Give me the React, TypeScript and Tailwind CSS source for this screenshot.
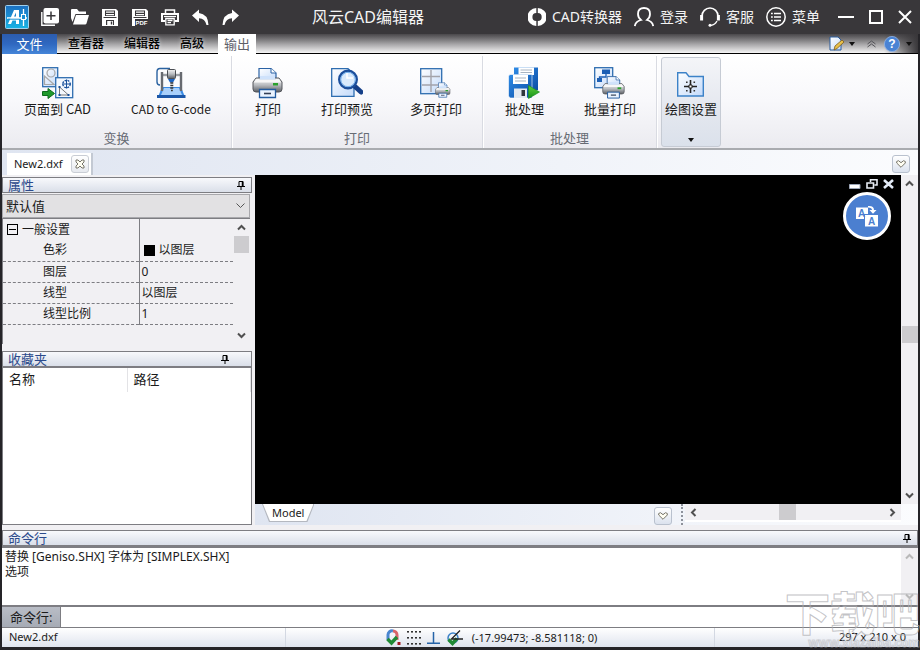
import type { ReactNode } from "react";

interface PropertyRow {
  name: string;
  value: string;
  swatch?: boolean;
}

const PROPERTIES: PropertyRow[] = [
  { name: "色彩", value: "以图层", swatch: true },
  { name: "图层", value: "0" },
  { name: "线型", value: "以图层" },
  { name: "线型比例", value: "1" },
];

const RIBBON_TABS = ["查看器", "编辑器", "高级"];

/* ── Title bar icons ── */

function LogoIcon() {
  return (
    <svg width="24" height="24" viewBox="0 0 24 24" fill="none">
      <defs>
        <linearGradient id="logo" x1="0" y1="0" x2="0" y2="1">
          <stop offset="0" stopColor="#1c6fc0" />
          <stop offset="1" stopColor="#18b4e6" />
        </linearGradient>
      </defs>
      <rect x="0.5" y="0.5" width="23" height="23" rx="1" fill="url(#logo)" stroke="#9fd0ee" />
      <path d="M3 19 L9 5 H14 V19 H11 V15.500 H7.500 L6 19 Z" fill="#fff" />
      <path d="M9 11.500 L11 7.500 V11.500 Z" fill="#1c83cc" />
      <path d="M2 13 H22 M18.500 4 V21" stroke="#fff" strokeWidth="1.300" />
      <path d="M3 14.200 H14" stroke="#1a93d4" strokeWidth="1" />
      <rect x="16.500" y="9.500" width="4" height="5" fill="#1a8fd2" stroke="#fff" />
    </svg>
  );
}

function NewIcon() {
  return (
    <svg width="18" height="18" viewBox="0 0 18 18" fill="none">
      <path d="M0.800 4 V17.200 H14" stroke="#fff" strokeWidth="1.400" />
      <rect x="2.500" y="0" width="15.500" height="15.500" rx="2" fill="#fff" />
      <path d="M10 3.500 V12 M5.500 7.750 H14.500" stroke="#39373a" strokeWidth="1.500" />
    </svg>
  );
}

function OpenIcon() {
  return (
    <svg width="18" height="18" viewBox="0 0 18 18" fill="#fff">
      <path d="M0 2 Q0 1 1 1 H6 L8 3.500 H15 V6 H4.500 L1.500 14 L0 10 Z" />
      <path d="M5 7 H18 L15.500 15.500 Q15.200 16.500 14 16.500 H2 Z" />
    </svg>
  );
}

function SaveIcon() {
  return (
    <svg width="16" height="17" viewBox="0 0 16 17">
      <path d="M0 0 H14 L16 2 V17 H0 Z" fill="#fff" />
      <path d="M3 1.500 H13 V7 H3 Z" fill="#39373a" />
      <path d="M4 2.500 H12 V3.700 H4 Z M4 5 H12 V6.200 H4 Z" fill="#fff" />
      <path d="M1.500 8 H14.500 V9 H1.500 Z M4 11 H12 V16 H4 Z" fill="#39373a" />
      <path d="M5.200 12 H11 V16 H5.200 Z" fill="#fff" />
      <path d="M8.800 12.500 H10.200 V15.500 H8.800 Z" fill="#39373a" />
    </svg>
  );
}

function SavePdfIcon() {
  return (
    <svg width="16" height="17" viewBox="0 0 16 17">
      <path d="M0 0 H14 L16 2 V17 H0 Z" fill="#fff" />
      <path d="M3 1.500 H13 V7 H3 Z" fill="#39373a" />
      <path d="M4 2.500 H12 V3.700 H4 Z M4 5 H12 V6.200 H4 Z" fill="#fff" />
      <path d="M1.500 8 H14.500 V9 H1.500 Z M3 10 H16 V17 H3 Z" fill="#39373a" />
      <text x="3.500" y="16" fontSize="6" fontWeight="700" fontFamily="Liberation Sans" fill="#fff">
        PDF
      </text>
    </svg>
  );
}

function PrintIcon() {
  return (
    <svg width="18" height="17" viewBox="0 0 18 17" fill="none" stroke="#fff">
      <path d="M4.500 5 V1 H13.500 V5" strokeWidth="1.500" />
      <path d="M4 12 H1 V5 H17 V12 H14" strokeWidth="2" />
      <path d="M3 7.500 H15" strokeWidth="1.200" />
      <path d="M4.800 9.500 H13.200 V15.800 H4.800 Z M6.500 11.500 H11.500 M6.500 13.700 H10" strokeWidth="1.300" />
    </svg>
  );
}

function UndoIcon({ flip }: { flip?: boolean }) {
  return (
    <svg
      width="17"
      height="17"
      viewBox="0 0 17 17"
      fill="#fff"
      className={flip ? "-scale-x-100" : undefined}
    >
      <path d="M0 6.500 L7 0.500 V4 Q16 5 16.500 16 L14.500 16 Q13 9.500 7 9.300 V13 Z" />
    </svg>
  );
}

function ConvertIcon() {
  return (
    <svg width="18" height="18" viewBox="0 0 18 18" fill="none" stroke="#fff" strokeWidth="5">
      <path d="M8.300 2.600 A6.400 6.400 0 0 0 8.300 15.400" />
      <path d="M9.800 2.600 A6.400 6.400 0 0 1 9.800 15.400" />
    </svg>
  );
}

function UserIcon() {
  return (
    <svg width="20" height="20" viewBox="0 0 20 20" fill="none" stroke="#fff" strokeWidth="1.800">
      <path d="M0.800 19 Q1.500 14.500 7 13 Q4 10.500 4 7 Q4 1 10 1 Q16 1 16 7 Q16 10.500 13 13 Q18.500 14.500 19.200 19" />
    </svg>
  );
}

function HeadsetIcon() {
  return (
    <svg width="20" height="20" viewBox="0 0 20 20" fill="none" stroke="#fff">
      <path d="M2 9 A8 8 0 0 1 18 9" strokeWidth="1.600" />
      <path d="M1.600 8 V13.500 M18.400 8 V13.500" strokeWidth="3" />
      <path d="M17 14 Q15 18 11 18.300" strokeWidth="1.300" />
      <circle cx="10" cy="18.300" r="1.500" fill="#fff" stroke="none" />
    </svg>
  );
}

function MenuIcon() {
  return (
    <svg width="20" height="20" viewBox="0 0 20 20" fill="none" stroke="#fff">
      <circle cx="10" cy="10" r="9.200" strokeWidth="1.500" />
      <path d="M8 6.500 H15 M8 10 H15 M8 13.500 H15" strokeWidth="1.600" />
      <path d="M5 6.500 H6.800 M5 10 H6.800 M5 13.500 H6.800" strokeWidth="1.600" />
    </svg>
  );
}

/* ── Ribbon icons ── */

function SvgDefs() {
  return (
    <svg width="0" height="0" className="absolute" aria-hidden="true">
      <defs>
        <linearGradient id="paper" x1="0" y1="0" x2="1" y2="1">
          <stop offset="0" stopColor="#ffffff" />
          <stop offset="1" stopColor="#c3dafa" />
        </linearGradient>
        <linearGradient id="metal" x1="0" y1="0" x2="0" y2="1">
          <stop offset="0" stopColor="#f4f4f4" />
          <stop offset="0.500" stopColor="#b9bcc0" />
          <stop offset="1" stopColor="#5b5e64" />
        </linearGradient>
        <linearGradient id="floppy" x1="0" y1="0" x2="1" y2="1">
          <stop offset="0" stopColor="#2f8be6" />
          <stop offset="1" stopColor="#0b4ea6" />
        </linearGradient>
        <linearGradient id="leaf" x1="0" y1="0" x2="0" y2="1">
          <stop offset="0" stopColor="#5fd03c" />
          <stop offset="1" stopColor="#149018" />
        </linearGradient>
      </defs>
    </svg>
  );
}

function PageToCadIcon() {
  return (
    <svg width="32" height="32" viewBox="0 0 32 32" fill="none">
      <rect x="0.700" y="0.700" width="15" height="19" fill="url(#paper)" stroke="#2e6db0" strokeWidth="1.300" />
      <circle cx="9" cy="6" r="4" stroke="#a7a7a7" strokeWidth="1.200" />
      <path d="M2.500 9 V17.500 H12 Z" stroke="#a7a7a7" strokeWidth="1.200" />
      <rect x="13.700" y="10.700" width="17" height="20" fill="#f3f8ff" stroke="#2e6db0" strokeWidth="1.300" />
      <circle cx="24.500" cy="17" r="3.700" stroke="#174f9a" strokeWidth="1.300" strokeDasharray="2 1" />
      <path d="M20 17 H29 M24.500 12.500 V21.500" stroke="#174f9a" strokeWidth="1" />
      <path d="M17.500 20 V28 H26.500 Z" stroke="#777" strokeWidth="1" />
      <path d="M16.500 19 h2 v2 h-2 Z M16.500 27 h2 v2 h-2 Z M25.500 27 h2 v2 h-2 Z" fill="#174f9a" />
      <path d="M0.500 24.500 H6 V21.500 L12.500 26.500 L6 31.500 V28.500 H0.500 Z" fill="#1f9a2c" stroke="#0d6a1c" />
    </svg>
  );
}

function GcodeIcon() {
  return (
    <svg width="30" height="32" viewBox="0 0 30 32" fill="none">
      <path d="M14 1.500 H4 Q1 1.500 1 5 V15 Q1 18 4 18" stroke="#2a62a0" strokeWidth="1.400" />
      <path d="M6 20 L2 30 H29 L25 20 Z" fill="#3b8be4" />
      <path d="M8 21 L5 28 H26 L23 21 Z" fill="#a9d0fb" />
      <path d="M1 28 H29.500 V31 H1 Z" fill="#1c57a8" />
      <path d="M5 8 H26" stroke="#9b9ea3" strokeWidth="2.400" />
      <path d="M6 5 V24 M25 5 V24" stroke="#676a70" strokeWidth="2.400" />
      <rect x="11.500" y="2.500" width="8" height="9" rx="1" fill="url(#metal)" stroke="#4b4e54" />
      <path d="M12 12 H19 L17 15.500 H14 Z" fill="#1c63c0" />
      <path d="M14.300 16 h3 M14.300 18.500 h3 M14.300 21 h3 M15 23.500 h1.800" stroke="#333" strokeWidth="1.500" />
    </svg>
  );
}

function PrinterShape() {
  return (
    <>
      <path d="M7 13 V1.500 H19 L24 6 V13 Z" fill="url(#paper)" stroke="#2b62a4" strokeWidth="1.200" />
      <path d="M19 1.500 V6 H24" fill="#fff" stroke="#2b62a4" />
      <path d="M4 11 H27 L30 15 V22 Q30 25 27 25 H4 Q1 25 1 22 V15 Z" fill="url(#metal)" stroke="#54575c" />
      <path d="M4 12 H7 V13 H24 V12 H27 L29 15.500 H2 Z" fill="#f7f7f7" />
      <path d="M8 9 H23 V12.500 H8 Z" fill="#cfe2fb" />
      <path d="M21 16 H26 V18.500 H21 Z" fill="#2aa12c" />
      <path d="M7.500 22.500 H23.500 V30.500 H7.500 Z" fill="#eaf3ff" stroke="#235b9f" strokeWidth="1.300" />
      <path d="M12 26.500 H19" stroke="#333f55" strokeWidth="1.600" />
    </>
  );
}

function BigPrinterIcon() {
  return (
    <svg width="32" height="32" viewBox="0 0 32 32">
      <PrinterShape />
    </svg>
  );
}

function PreviewIcon() {
  return (
    <svg width="32" height="32" viewBox="0 0 32 32" fill="none">
      <path d="M0.700 1.700 H17 L23 7 V29.300 H0.700 Z" fill="url(#paper)" stroke="#2e6db0" strokeWidth="1.300" />
      <path d="M24 19.500 L30 25" stroke="#153f88" strokeWidth="5" strokeLinecap="round" />
      <circle cx="17" cy="12.500" r="8.800" fill="#d9eafc" stroke="#1c4f9c" strokeWidth="2.400" />
      <circle cx="17" cy="12.500" r="7.200" stroke="#74b1ee" strokeWidth="1" />
      <path d="M16 6 V11 H22" stroke="#fff" strokeWidth="1.500" />
    </svg>
  );
}

function MultiPageIcon() {
  return (
    <svg width="32" height="32" viewBox="0 0 32 32" fill="none">
      <rect x="0.700" y="1.700" width="21" height="25" fill="url(#paper)" stroke="#2e6db0" strokeWidth="1.300" />
      <path d="M11 3 V25 M2 9.500 H20 M2 18 H20" stroke="#a3a3aa" strokeWidth="1.400" />
      <g transform="translate(15 15) scale(0.500)">
        <PrinterShape />
      </g>
    </svg>
  );
}

function BatchIcon() {
  return (
    <svg width="32" height="32" viewBox="0 0 32 32" fill="none">
      <path d="M6 0.500 H30 V23 H6 Z" fill="url(#floppy)" />
      <path d="M10.500 0.500 H26 V8 H10.500 Z" fill="#fff" />
      <path d="M12.500 3 H24 M12.500 5.500 H24" stroke="#a8b4c2" strokeWidth="1" />
      <path d="M2 7.500 H24 V31 H2 L0.500 29 V9 Z" fill="url(#floppy)" stroke="#fff" strokeWidth="0.600" />
      <path d="M5 8 H20 V17 H5 Z" fill="#fff" />
      <path d="M7 11 H18 M7 14 H18" stroke="#a8b4c2" strokeWidth="1.200" />
      <path d="M6 21.500 H19 V31 H6 Z" fill="#e3e9f1" />
      <path d="M13.500 23 H17 V29 H13.500 Z" fill="#30353c" />
      <path d="M20.500 18.500 L31.500 25 L20.500 31.500 Z" fill="url(#leaf)" stroke="#1d8f22" strokeWidth="0.700" />
    </svg>
  );
}

function BatchPrintIcon() {
  return (
    <svg width="32" height="32" viewBox="0 0 32 32" fill="none">
      <rect x="0.700" y="0.700" width="18" height="20" fill="url(#paper)" stroke="#2e6db0" strokeWidth="1.300" />
      <path d="M8 2.500 H16 V7 H8 Z M3 11 H8 V15 H3 Z" fill="#1d5fb4" />
      <path d="M12 7 V10 H5.500 V12" stroke="#1d5fb4" strokeWidth="1.300" />
      <g transform="translate(8 8.500) scale(0.740)">
        <PrinterShape />
      </g>
    </svg>
  );
}

function DrawingSettingsIcon() {
  return (
    <svg width="27" height="26" viewBox="0 0 27 26" fill="none">
      <path d="M0.700 25 V1.700 H9 L12 5.500 H26.300 V25 Z" fill="url(#paper)" stroke="#3c82c8" strokeWidth="1.400" />
      <path d="M13.500 9 V14 M13.500 17 V22 M7 15.500 H12 M15 15.500 H20" stroke="#222" strokeWidth="1.600" />
      <path
        d="M9 10.500 h1.600 v1.600 h-1.600 Z M16.500 10.500 h1.600 v1.600 h-1.600 Z M9 19 h1.600 v1.600 h-1.600 Z M16.500 19 h1.600 v1.600 h-1.600 Z"
        fill="#333"
      />
      <path d="M12 14 h3 v3 h-3 Z" fill="#fff" stroke="#222" />
    </svg>
  );
}

/* ── Small glyphs ── */

function Triangle() {
  return (
    <svg width="6" height="4" viewBox="0 0 6 4" fill="#111">
      <path d="M0 0 H6 L3 4 Z" />
    </svg>
  );
}

function PinIcon() {
  return (
    <svg width="8" height="9" viewBox="0 0 8 9" fill="none" stroke="#000">
      <path d="M2 5 V0.500 H6 V5 M0 5.500 H8 M4 6 V9" />
      <path d="M5.500 0.500 V5" strokeWidth="1.500" />
    </svg>
  );
}

function HeartIcon() {
  return (
    <svg width="10" height="8" viewBox="0 0 10 8" fill="#fffef2" stroke="#77756a">
      <path d="M5 7.300 L0.700 3 L0.700 1.500 L2.500 0.700 L5 2.700 L7.500 0.700 L9.300 1.500 L9.300 3 Z" />
    </svg>
  );
}

type Direction = "up" | "down" | "left" | "right";

const ARROW_PATHS: Record<Direction, string> = {
  up: "M1 6.500 L4.500 3 L8 6.500",
  down: "M1 2.500 L4.500 6 L8 2.500",
  left: "M6.500 1 L3 4.500 L6.500 8",
  right: "M2.500 1 L6 4.500 L2.500 8",
};

function ScrollButton({ direction, label, muted }: { direction: Direction; label: string; muted?: boolean }) {
  return (
    <button type="button" aria-label={label} className="flex size-[17px] shrink-0 items-center justify-center">
      <svg width="9" height="9" viewBox="0 0 9 9" fill="none" stroke={muted ? "#b9b9b9" : "#505050"} strokeWidth="2">
        <path d={ARROW_PATHS[direction]} />
      </svg>
    </button>
  );
}

function DropButton({ label }: { label: string }) {
  return (
    <button
      type="button"
      aria-label={label}
      className="flex size-[18px] items-center justify-center rounded-[3px] border border-[#b9c1ce] bg-gradient-to-b from-white to-[#dbe2ee]"
    >
      <HeartIcon />
    </button>
  );
}

function PanelHeader({ title, pinClass }: { title: string; pinClass: string }) {
  return (
    <div
      className={`flex h-4 shrink-0 items-center justify-between border border-[#7d7d82] bg-gradient-to-b from-[#f8f9fc] to-[#dadfe9] pl-[5px] ${pinClass}`}
    >
      <h2 className="text-[13px] leading-4 text-[#2b4a8b]">{title}</h2>
      <button type="button" aria-label={`固定${title}`}>
        <PinIcon />
      </button>
    </div>
  );
}

function RibbonButton({ icon, label, small }: { icon: ReactNode; label: string; small?: boolean }) {
  return (
    <button type="button" className="flex flex-col items-center">
      <span className="flex h-8 items-center">{icon}</span>
      <span
        className={`font-['Noto_Sans_CJK_SC',sans-serif] whitespace-nowrap text-[#1b1b1b] ${
          small ? "text-xs leading-5" : "text-[13px] leading-5"
        }`}
      >
        {label}
      </span>
    </button>
  );
}

function RibbonGroup({ title, spacing, children }: { title: string; spacing: string; children: ReactNode }) {
  return (
    <section className="mt-0.5 flex flex-col justify-between border-r border-[#d9dbe2] pb-px shadow-[1px_0_0_#fff]">
      <div className={`flex pt-[11px] pr-5 ${spacing}`}>{children}</div>
      <h2 className="text-center text-[13px] leading-[18px] text-[#676b74]">{title}</h2>
    </section>
  );
}

function TitleLink({ icon, label }: { icon: ReactNode; label: string }) {
  return (
    <button type="button" className="flex items-center gap-1.5 text-sm whitespace-nowrap">
      {icon}
      {label}
    </button>
  );
}

function TitleBar() {
  return (
    <header className="flex h-[34px] shrink-0 items-center bg-[#39373a] pr-2 pl-[5px] text-[#f4f4f4]">
      <LogoIcon />
      <div className="ml-1.5 flex items-center">
        {[
          { label: "新建", icon: <NewIcon /> },
          { label: "打开", icon: <OpenIcon /> },
          { label: "保存", icon: <SaveIcon /> },
          { label: "保存为 PDF", icon: <SavePdfIcon /> },
          { label: "打印", icon: <PrintIcon /> },
          { label: "撤销", icon: <UndoIcon /> },
          { label: "重做", icon: <UndoIcon flip /> },
        ].map((item) => (
          <button key={item.label} type="button" aria-label={item.label} className="flex w-[30px] justify-center">
            {item.icon}
          </button>
        ))}
      </div>
      <h1 className="ml-[67px] text-base whitespace-nowrap">风云CAD编辑器</h1>
      <div className="ml-auto flex items-center gap-3">
        <TitleLink icon={<ConvertIcon />} label="CAD转换器" />
        <TitleLink icon={<UserIcon />} label="登录" />
        <TitleLink icon={<HeadsetIcon />} label="客服" />
        <TitleLink icon={<MenuIcon />} label="菜单" />
      </div>
      <div className="ml-[18px] flex items-center gap-[15px]">
        <button type="button" aria-label="最小化">
          <svg width="16" height="14" viewBox="0 0 16 14" stroke="#fff" strokeWidth="2">
            <path d="M0 7 H16" />
          </svg>
        </button>
        <button type="button" aria-label="最大化">
          <svg width="14" height="14" viewBox="0 0 14 14" fill="none" stroke="#fff" strokeWidth="2">
            <path d="M1 1 H13 V13 H1 Z" />
          </svg>
        </button>
        <button type="button" aria-label="关闭">
          <svg width="14" height="14" viewBox="0 0 14 14" stroke="#fff" strokeWidth="2">
            <path d="M1 1 L13 13 M13 1 L1 13" />
          </svg>
        </button>
      </div>
    </header>
  );
}

function RibbonTabs() {
  return (
    <nav className="flex h-5 shrink-0 bg-gradient-to-b from-[#4a484b] via-[#a5a4a6] to-white text-xs">
      <button
        type="button"
        className="w-[55px] bg-gradient-to-b from-[#2c5cae] via-[#2f68c0] to-[#4585d8] text-center text-[13px] leading-5 text-white"
      >
        文件
      </button>
      <div className="flex gap-5 border-b border-black px-[11px] pr-[14px]">
        {RIBBON_TABS.map((tab) => (
          <button
            key={tab}
            type="button"
            className="leading-[19px] font-medium text-black [text-shadow:0_0_4px_#ffffffb0]"
          >
            {tab}
          </button>
        ))}
      </div>
      <button type="button" className="w-[38px] bg-white text-center text-[13px] leading-5 text-[#5d6068]">
        输出
      </button>
      <div className="flex flex-1 items-center justify-end border-b border-black">
        <button type="button" aria-label="样式" className="mr-3 flex items-center gap-1">
          <svg width="16" height="16" viewBox="0 0 16 16" fill="none">
            <path d="M1 1 H9 L12 4 V14 H1 Z" fill="url(#paper)" stroke="#2b5c9e" />
            <path d="M5 14 L6 10 L13 4 L15 6 L8 12.500 Z" fill="#e9c14b" stroke="#7b5a1c" strokeWidth="0.800" />
          </svg>
          <Triangle />
        </button>
        <button type="button" aria-label="收起功能区" className="mr-2">
          <svg width="9" height="8" viewBox="0 0 9 8" fill="none" stroke="#55555a">
            <path d="M0.500 4 L4.500 1 L8.500 4 M0.500 7 L4.500 4 L8.500 7" />
          </svg>
        </button>
        <div className="flex h-full items-center gap-1.5 bg-gradient-to-r from-transparent to-[#39373a] pr-1.5">
          <button type="button" aria-label="帮助">
            <svg width="16" height="16" viewBox="0 0 16 16">
              <circle cx="8" cy="8" r="7.600" fill="#4a83d4" stroke="#8fb3e6" strokeWidth="0.800" />
              <text x="8" y="12" fontSize="12" fontWeight="700" textAnchor="middle" fontFamily="Liberation Sans" fill="#fff">
                ?
              </text>
            </svg>
          </button>
          <Triangle />
        </div>
      </div>
    </nav>
  );
}

function Ribbon() {
  return (
    <div className="flex h-24 shrink-0 border-b-2 border-[#a9abaf] bg-gradient-to-b from-white via-[#f8f8fb] to-[#ebebf0]">
      <RibbonGroup title="变换" spacing="gap-10 pl-[22px]">
        <RibbonButton icon={<PageToCadIcon />} label="页面到 CAD" />
        <RibbonButton icon={<GcodeIcon />} label="CAD to G-code" small />
      </RibbonGroup>
      <RibbonGroup title="打印" spacing="gap-[37px] pl-5">
        <RibbonButton icon={<BigPrinterIcon />} label="打印" />
        <RibbonButton icon={<PreviewIcon />} label="打印预览" />
        <RibbonButton icon={<MultiPageIcon />} label="多页打印" />
      </RibbonGroup>
      <RibbonGroup title="批处理" spacing="gap-10 pl-[22px]">
        <RibbonButton icon={<BatchIcon />} label="批处理" />
        <RibbonButton icon={<BatchPrintIcon />} label="批量打印" />
      </RibbonGroup>
      <button
        type="button"
        className="my-[3px] mb-px ml-1 flex w-[60px] flex-col items-center rounded-[3px] border border-[#c6cbd4] bg-gradient-to-b from-[#f4f5f8] via-[#e6e9f0] to-[#dbe1eb] pt-[13px]"
      >
        <DrawingSettingsIcon />
        <span className="mt-0.5 text-[13px] leading-5 whitespace-nowrap text-[#1b1b1b]">绘图设置</span>
        <span className="mt-auto mb-1">
          <Triangle />
        </span>
      </button>
    </div>
  );
}

function DocumentTabs() {
  return (
    <div className="flex h-[25px] shrink-0 items-end justify-between bg-gradient-to-r from-[#dfe5f1] to-[#fbfcfe] pr-2 pl-[5px]">
      <div className="flex h-[22px] items-center gap-2 border-r-2 border-[#c3c9d3] bg-white pr-0.5 pl-[7px] text-[11px]">
        <span>New2.dxf</span>
        <button
          type="button"
          aria-label="关闭 New2.dxf"
          className="flex size-[18px] items-center justify-center rounded-[3px] border border-[#c9cdd5] bg-gradient-to-b from-white to-[#e6e9ef]"
        >
          <svg width="10" height="10" viewBox="0 0 10 10" fill="#fffef2" stroke="#77756a">
            <path d="M1 1 H3 L5 3 L7 1 H9 V3 L7 5 L9 7 V9 H7 L5 7 L3 9 H1 V7 L3 5 L1 3 Z" />
          </svg>
        </button>
      </div>
      <div className="mb-0.5">
        <DropButton label="文档列表" />
      </div>
    </div>
  );
}

function PropertiesPanel() {
  return (
    <section className="flex flex-col">
      <PanelHeader title="属性" pinClass="pr-[6px]" />
      <div className="relative mt-px mr-0.5">
        <select
          aria-label="对象"
          className="block h-6 w-full appearance-none border border-[#a8a8ac] bg-[#e2e1e3] pl-[3px] text-[13px] leading-5"
        >
          <option>默认值</option>
        </select>
        <svg
          width="9"
          height="6"
          viewBox="0 0 9 6"
          fill="none"
          stroke="#555"
          className="pointer-events-none absolute top-[9px] right-[5px]"
        >
          <path d="M0.500 0.500 L4.500 4.500 L8.500 0.500" />
        </svg>
      </div>
      <div className="mr-0.5 flex h-[126px] border-t border-l border-[#7d7d82] bg-[#f1f0f3]">
        <div className="flex-1">
          <table className="w-full table-fixed border-collapse text-left text-xs">
            <tbody>
              <tr className="h-[21px]">
                <th className="w-[136px] border-r border-[#7d7d82] font-normal">
                  <span className="flex items-center gap-1 pl-1">
                    <button
                      type="button"
                      aria-label="折叠一般设置"
                      className="flex size-[11px] items-center justify-center border border-black"
                    >
                      <span className="h-px w-[7px] bg-black" />
                    </button>
                    一般设置
                  </span>
                </th>
                <td />
              </tr>
              {PROPERTIES.map((row) => (
                <tr key={row.name} className="h-[21px] border-b border-dashed border-[#7d7d82]">
                  <th className="border-r border-[#7d7d82] pl-10 font-normal">{row.name}</th>
                  <td className="pl-0.5">
                    <span className="flex items-center gap-1">
                      {row.swatch && <span className="ml-0.5 size-[11px] bg-black" />}
                      {row.value}
                    </span>
                  </td>
                </tr>
              ))}
            </tbody>
          </table>
        </div>
        <div className="flex w-[17px] flex-col">
          <ScrollButton direction="up" label="向上滚动属性" />
          <div className="mx-px h-[17px] bg-[#cdcccf]" />
          <div className="flex-1" />
          <ScrollButton direction="down" label="向下滚动属性" />
        </div>
      </div>
    </section>
  );
}

function FavoritesPanel() {
  return (
    <section className="mt-[7px] flex min-h-0 flex-1 flex-col">
      <PanelHeader title="收藏夹" pinClass="pr-[22px]" />
      <div className="flex-1 border border-[#7d7d82] bg-white">
        <table className="w-full table-fixed text-left text-[13px]">
          <thead>
            <tr className="h-6">
              <th className="w-[124px] border-r border-[#e3e3e6] pl-1.5 font-normal">名称</th>
              <th className="border-r border-[#e3e3e6] pl-1.5 font-normal">路径</th>
            </tr>
          </thead>
        </table>
      </div>
    </section>
  );
}

function DrawingArea() {
  return (
    <main className="flex min-w-0 flex-1 flex-col">
      <div className="flex min-h-0 flex-1">
        <div className="relative flex-1 bg-black">
          <div className="absolute top-1 right-[7px] flex items-center gap-[5px]">
            <button type="button" aria-label="最小化窗口">
              <svg width="12" height="10" viewBox="0 0 12 10" fill="#fff" stroke="#9aa4b5">
                <path d="M0.500 5.500 H11 V9.500 H0.500 Z" />
              </svg>
            </button>
            <button type="button" aria-label="还原窗口">
              <svg width="12" height="10" viewBox="0 0 12 10" fill="none" stroke="#e8edf5" strokeWidth="1.600">
                <path d="M4.500 3 V0.800 H11 V6 H8.500 M1 4 H7.500 V9 H1 Z" />
              </svg>
            </button>
            <button type="button" aria-label="关闭窗口">
              <svg width="11" height="10" viewBox="0 0 11 10" fill="none" stroke="#e3ebf7" strokeWidth="2.600">
                <path d="M1 1 L10 9 M10 1 L1 9" />
              </svg>
            </button>
          </div>
          <button
            type="button"
            aria-label="翻译"
            className="absolute top-[17px] right-2.5 flex size-12 items-center justify-center rounded-full border-[3px] border-white bg-[#4b7fd0]"
          >
            <svg width="24" height="24" viewBox="0 0 24 24">
              <path d="M1 3.500 H13 V10 H9 V15 H1 Z" fill="#fff" />
              <path d="M10 11 H23 V22.500 H10 Z" fill="#fff" />
              <path d="M13 2 Q19 1.500 19 6 H21.500 L18 9.800 L14.500 6 H17 Q17 3.500 13 3.500 Z" fill="#fff" />
              <g fill="#4b7fd0" fontSize="10" fontWeight="700" fontFamily="Liberation Sans">
                <text x="3" y="13">A</text>
                <text x="13" y="20.500">A</text>
              </g>
            </svg>
          </button>
        </div>
        <div className="flex w-[17px] flex-col bg-[#f1f0f3]">
          <ScrollButton direction="up" label="向上滚动" />
          <div className="grow-[14]" />
          <div className="ml-px h-[17px] bg-[#cdcccf]" />
          <div className="grow-[15]" />
          <ScrollButton direction="down" label="向下滚动" />
        </div>
      </div>
      <div className="flex h-[21px] shrink-0 bg-gradient-to-r from-[#dfe5f1] to-[#fbfcfe] pl-[7px]">
        <div className="h-[18px] bg-[#b4b8c0] px-px pb-px [clip-path:polygon(0_0,100%_0,calc(100%-7px)_100%,7px_100%)]">
          <button
            type="button"
            className="block h-[17px] bg-white px-[9px] text-[11px] leading-4 [clip-path:polygon(0_0,100%_0,calc(100%-7px)_100%,7px_100%)]"
          >
            Model
          </button>
        </div>
        <div className="mt-[3px] ml-auto">
          <DropButton label="布局列表" />
        </div>
        <div className="mx-[9px] mr-0 border-l-2 border-dotted border-[#8e929b]" />
        <div className="ml-0.5 flex h-[18px] w-[216px] border-b-2 border-white bg-[#f1f0f3]">
          <ScrollButton direction="left" label="向左滚动" />
          <div className="grow-[77]" />
          <div className="h-4 w-[17px] bg-[#cdcccf]" />
          <div className="grow-[88]" />
          <ScrollButton direction="right" label="向右滚动" />
        </div>
        <div className="w-[17px]" />
      </div>
    </main>
  );
}

function CommandPanel() {
  return (
    <section className="mt-[5px] flex shrink-0 flex-col">
      <PanelHeader title="命令行" pinClass="pr-[6px]" />
      <div className="flex h-[61px] border-y-2 border-[#7d7d82] bg-white">
        <div role="log" className="flex-1 pt-px pl-[3px] text-xs leading-[15px]">
          <p>替换 [Geniso.SHX] 字体为 [SIMPLEX.SHX]</p>
          <p>选项</p>
        </div>
        <div className="flex w-[17px] flex-col justify-between bg-[#f1f0f3]">
          <ScrollButton direction="up" label="向上滚动日志" muted />
          <ScrollButton direction="down" label="向下滚动日志" muted />
        </div>
      </div>
      <div className="flex h-[21px] border-b border-[#7d7d82] bg-white">
        <label
          htmlFor="command"
          className="w-[59px] border-r border-[#7d7d82] bg-gradient-to-b from-[#b9bdc6] to-[#a6abb5] pl-2 text-[13px] leading-5"
        >
          命令行:
        </label>
        <input id="command" type="text" className="min-w-0 flex-1 px-1 text-xs outline-none" />
      </div>
    </section>
  );
}

function StatusBar() {
  return (
    <footer className="flex h-[19px] shrink-0 items-stretch bg-gradient-to-b from-white to-[#dfe4ee] text-[11px] leading-[18px]">
      <div className="w-[284px] border-r border-[#d3d8e2] pl-[7px]">New2.dxf</div>
      <div className="flex flex-1 items-center justify-center gap-[5px] border-r border-[#d3d8e2] pr-[18px]">
        <button type="button" aria-label="对象捕捉">
          <svg width="16" height="17" viewBox="0 0 16 17" fill="none">
            <path d="M3 11 V6 A4 4 0 0 1 8 2" stroke="#4a86d0" strokeWidth="3" />
            <path d="M8 2 A4 4 0 0 1 12 6 V11" stroke="#d8656a" strokeWidth="3" />
            <path d="M2.500 10 L6.500 14 L12 8" stroke="#1f8a35" strokeWidth="3.400" />
            <path d="M12.500 13 h3 v3 h-3 Z" fill="#a11a22" />
          </svg>
        </button>
        <button type="button" aria-label="栅格">
          <svg width="15" height="15" viewBox="0 0 15 15" fill="#333">
            {[0, 4, 8, 12].map((x) =>
              [1, 7, 13].map((y) => <rect key={`${x}-${y}`} x={x + 1} y={y} width="2" height="1.600" />)
            )}
          </svg>
        </button>
        <button type="button" aria-label="正交">
          <svg width="15" height="14" viewBox="0 0 15 14" fill="none" stroke="#2563a8" strokeWidth="1.500">
            <path d="M7.500 1 V12 M1 12.200 H14" />
          </svg>
        </button>
        <button type="button" aria-label="极轴追踪">
          <svg width="17" height="16" viewBox="0 0 17 16" fill="none">
            <circle cx="7" cy="8" r="5" stroke="#3c82c8" strokeWidth="1.500" />
            <path d="M2.500 9.500 L6.500 13.500 L11 8.500" stroke="#1f8a35" strokeWidth="3.400" />
            <path d="M5 9.500 L14 0.500 M6 9 H17" stroke="#222" strokeWidth="1.300" />
          </svg>
        </button>
        <output className="ml-1">(-17.99473; -8.581118; 0)</output>
      </div>
      <div className="w-[203px] pr-3 text-right">297 x 210 x 0</div>
    </footer>
  );
}

export default function App() {
  return (
    <div className="relative flex h-screen flex-col overflow-hidden bg-[#39373a] font-['Noto_Sans','Noto_Sans_CJK_SC',sans-serif] text-[#1b1b1b]">
      <SvgDefs />
      <TitleBar />
      <div className="flex min-h-0 flex-1 flex-col border-x-2 border-b-[3px] border-[#252428] bg-[#f1f0f3]">
        <RibbonTabs />
        <Ribbon />
        <DocumentTabs />
        <div className="flex min-h-0 flex-1">
          <aside className="mr-[3px] flex w-[250px] shrink-0 flex-col pt-0.5">
            <PropertiesPanel />
            <FavoritesPanel />
          </aside>
          <DrawingArea />
        </div>
        <CommandPanel />
        <StatusBar />
      </div>

      {/* Watermark */}
      <div className="pointer-events-none absolute right-0 bottom-0 flex flex-col items-end text-transparent select-none">
        <span className="text-[45px] leading-[44px] font-black [-webkit-text-stroke:1px_#b0b0b4c0]">下载吧</span>
        <span className="text-xs leading-[14px] font-bold [-webkit-text-stroke:1px_#b8b8bc90]">
          www.xiazaiba.com
        </span>
      </div>
    </div>
  );
}
